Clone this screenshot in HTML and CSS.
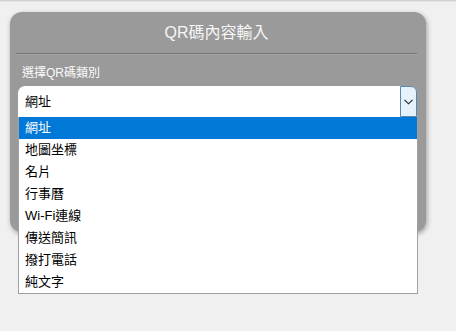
FILE: index.html
```html
<!DOCTYPE html>
<html lang="zh-Hant">
<head>
<meta charset="utf-8">
<title>QR碼內容輸入</title>
<link rel="stylesheet" href="styles.css">
</head>
<body>
<div class="topline"></div>
<div class="card">
  <div class="card-title">QR碼內容輸入</div>
  <div class="rule"></div>
  <div class="field-label">選擇QR碼類別</div>
  <div class="picker">
    <div class="picker-box">
      <span class="picker-value">網址</span>
      <span class="picker-arrow">
        <svg width="9" height="6" viewBox="0 0 9 6"><path d="M0.5 0.8 L4.5 4.8 L8.5 0.8" fill="none" stroke="#222" stroke-width="1.1"/></svg>
      </span>
    </div>
    <ul class="picker-list">
      <li class="sel">網址</li>
      <li>地圖坐標</li>
      <li>名片</li>
      <li>行事曆</li>
      <li>Wi-Fi連線</li>
      <li>傳送簡訊</li>
      <li>撥打電話</li>
      <li>純文字</li>
    </ul>
  </div>
</div>
</body>
</html>
```

FILE: styles.css
```css
/* QR code input panel */

html, body
{ height: 100%;
}

body
{ margin: 0;
min-height: 331px;
background-color: #f0f0f0;
font-family: "Liberation Sans", "Noto Sans CJK TC", sans-serif;
}

div.topline
{ height: 2px;
background: linear-gradient(#c8c8c8, #ececec);
}

div.card
{ margin: 10px 0 0 10px;
width: 401px;
height: 220px;
padding: 0 9px 0 6px;
background-color: #9a9a9a;
border-radius: 12px;
box-shadow: 1px 2px 5px rgba(0,0,0,0.35);
}

div.card-title
{ height: 40px;
line-height: 42px;
text-align: center;
font-size: 16px;
color: #f6f6f6;
}

div.rule
{ margin-top: 1px;
border-top: 1px solid #777;
border-bottom: 1px solid #a4a4a4;
}

div.field-label
{ margin-top: 9px;
padding-left: 6px;
height: 18px;
line-height: 18px;
font-size: 12px;
color: #fafafa;
}

div.picker
{ position: relative;
margin: 4px 0 0 2px;
width: 399px;
}

div.picker-box
{ display: flex;
height: 31px;
background: white;
border-radius: 7px 7px 0 0;
}

span.picker-value
{ flex: 1;
padding-left: 7px;
line-height: 32px;
font-size: 13px;
color: #000;
}

span.picker-arrow
{ display: flex;
align-items: center;
justify-content: center;
width: 15px;
margin: 0;
background-color: #e5f1fb;
border: 1px solid #5a87b0;
border-radius: 0 6px 0 0;
}

ul.picker-list
{ position: absolute;
top: 31px;
left: 0;
width: 398px;
margin: 0;
padding: 0;
list-style: none;
background: white;
border: 1px solid #a0a0a0;
border-top: none;
z-index: 2;
}

ul.picker-list li
{ height: 22px;
line-height: 22px;
padding-left: 6px;
font-size: 13px;
color: #000;
}

ul.picker-list li.sel
{ background-color: #0078d7;
color: white;
}
```
